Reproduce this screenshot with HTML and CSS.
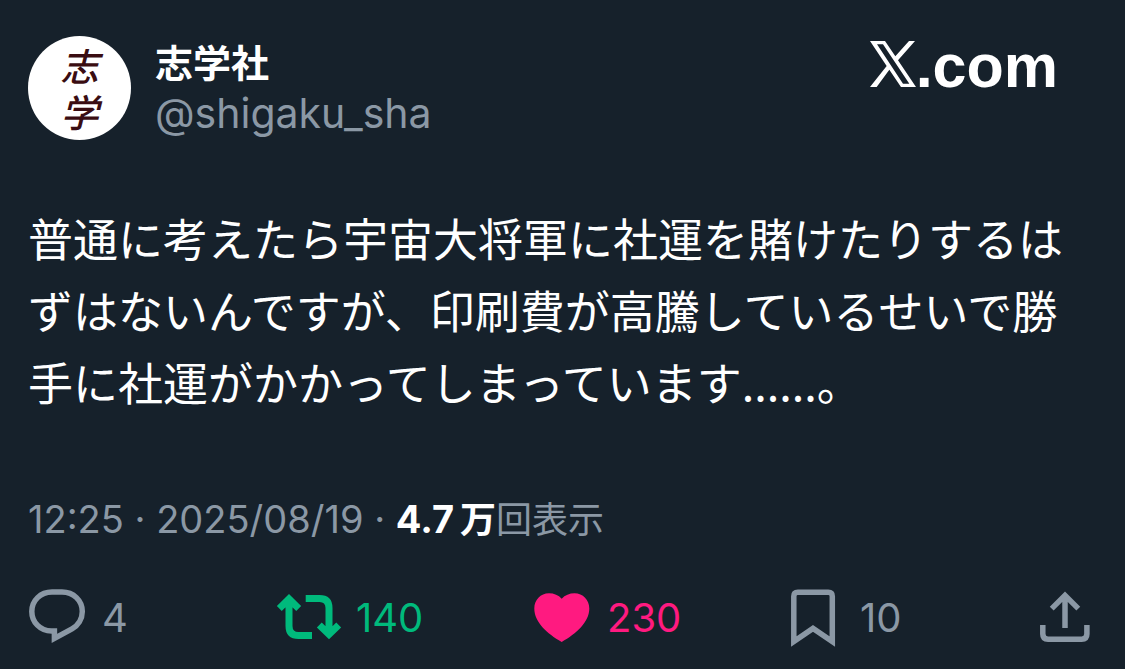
FILE: index.html
```
<!DOCTYPE html>
<html lang="ja">
<head>
<meta charset="utf-8">
<meta name="viewport" content="width=device-width, initial-scale=1">
<title>志学社</title>
<link rel="stylesheet" href="styles.css">
</head>
<body>
<article class="post">
  <header class="header">
    <div class="avatar">志<br>学</div>
    <div class="author">
      <h1 class="name">志学社</h1>
      <a class="handle" href="#">@shigaku_sha</a>
    </div>
    <a class="brand" href="#">
      <svg class="brand-mark" width="46" height="46" viewBox="0 0 138 138" aria-label="X">
        <path fill-rule="evenodd" d="M0 0H45L76 46L117 0H135L84 58L138 138H93L58 86L20 138H0L50 75ZM21 10L99 128H118L39 10Z"/>
      </svg>
      <span>.com</span>
    </a>
  </header>
  <p class="body">普通に考えたら宇宙大将軍に社運を賭けたりするはずはないんですが、印刷費が高騰しているせいで勝手に社運がかかってしまっています......。</p>
  <div class="meta"><time datetime="2025-08-19T12:25">12:25 · 2025/08/19</time> · <strong>4.7<span class="unit">万</span></strong><span class="views">回表示</span></div>
  <div class="actions">
    <button class="action" type="button" aria-label="返信 4">
      <svg width="58" height="60" viewBox="0 0 58 60"><path class="line" d="M24 4H34C45.5 4 54.3 12.5 54.3 23.5C54.3 31 50 37.5 44 40.8L26.4 50.3V43H23.5C12 43 3.8 34 3.8 23.5C3.8 12.5 12.5 4 24 4Z"/></svg>
      <span>4</span>
    </button>
    <button class="action repost" type="button" aria-label="リポスト 140">
      <svg width="66" height="60" viewBox="0 -4 66 60"><path class="line heavy" d="M3.3 16.5L13 7L22.7 16.5M13 7V34Q13 43.5 22.5 43.5H36M29.7 6.5H43.5Q53 6.5 53 16V42M43.3 33L53 42.4L62.7 33"/></svg>
      <span>140</span>
    </button>
    <button class="action like" type="button" aria-label="いいね 230">
      <svg width="58" height="60" viewBox="0 -4 58 60"><path fill="currentColor" d="M28.7 6.7C25.5 3.2 21 1.3 16 1.3C7.5 1.3 1.3 8 1.3 16.5C1.3 30 14 41.5 28.7 50C43.4 41.5 56.3 30 56.3 16.5C56.3 8 50 1.3 41.5 1.3C36.5 1.3 32 3.2 28.7 6.7Z"/></svg>
      <span>230</span>
    </button>
    <button class="action bookmark" type="button" aria-label="ブックマーク 10">
      <svg width="46" height="60" viewBox="0 0 46 60"><path class="line" d="M3.8 53.5V8.2Q3.8 4.2 7.8 4.2H38.3Q42.3 4.2 42.3 8.2V53.5L23 40.4Z"/></svg>
      <span>10</span>
    </button>
    <button class="action" type="button" aria-label="共有">
      <svg width="52" height="60" viewBox="0 0 52 60"><path class="line" d="M12.7 20.6L26 7.3L39.3 20.6M26 7.3V40M3.8 37V46Q3.8 51.2 9 51.2H42.7Q47.9 51.2 47.9 46V37"/></svg>
    </button>
  </div>
</article>
</body>
</html>
```
FILE: styles.css
```
* {
  box-sizing: border-box;
}

body {
  margin: 0;
  background: #16212b;
  color: #fff;
  font-family: Inter, "Noto Sans CJK JP", sans-serif;
}

.post {
  padding: 36px 34px 18px 28px;
}

.header {
  display: flex;
  align-items: flex-start;
  gap: 24px;
  padding-right: 33px;
}

.avatar {
  flex: none;
  width: 103px;
  height: 104px;
  padding-top: 6px;
  border-radius: 50%;
  background: #fff;
  color: #3a0d12;
  font: italic 500 38px/46px "Noto Sans CJK JP", sans-serif;
  text-align: center;
}

.author {
  flex: 1;
}

.name {
  margin: 0;
  font: 700 38px/50px "Noto Sans CJK JP", sans-serif;
}

.handle {
  display: block;
  color: #8b98a5;
  font-size: 41px;
  line-height: 54px;
  text-decoration: none;
}

.brand {
  display: flex;
  align-items: baseline;
  color: #fff;
  font: 700 61px/60px "Liberation Sans", Arial, sans-serif;
  text-decoration: none;
}

.brand-mark {
  fill: currentColor;
}

.body {
  margin: 62px 0 0;
  font: 400 45px/72px "Noto Sans CJK JP", sans-serif;
}

.meta {
  margin-top: 73px;
  color: #8b98a5;
  font-size: 38px;
  line-height: 56px;
}

.meta strong {
  color: #fff;
}

.unit {
  margin-left: 6px;
  font-size: 36px;
}

.views {
  font-size: 36px;
}

.actions {
  display: grid;
  grid-template-columns: 248fr 257fr 257fr 249fr auto;
  align-items: center;
  margin-top: 40px;
}

.action {
  display: flex;
  align-items: center;
  gap: 16px;
  padding: 0;
  border: 0;
  background: none;
  color: #8b98a5;
  font: 400 40px/60px Inter, sans-serif;
  cursor: pointer;
}

.action svg {
  flex: none;
}

.repost {
  gap: 14px;
  color: #00ba7c;
}

.like {
  color: #ff1a80;
}

.bookmark {
  gap: 24px;
}

.line {
  fill: none;
  stroke: currentColor;
  stroke-width: 5.5;
}

.heavy {
  stroke-width: 7;
}
```
